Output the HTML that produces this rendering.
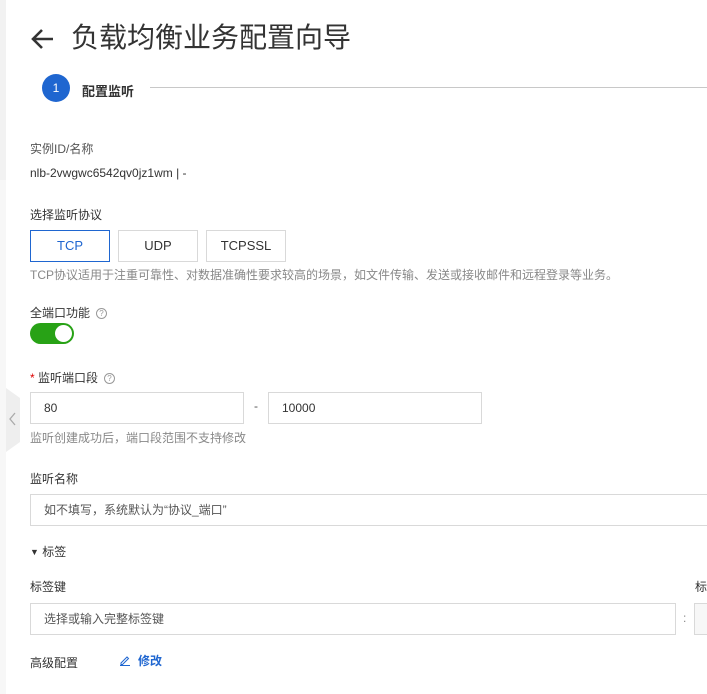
<!DOCTYPE html>
<html><head><meta charset="utf-8"><style>
*{box-sizing:border-box;margin:0;padding:0}
body{width:707px;height:694px;overflow:hidden;background:#fff;position:relative;font-family:"Liberation Sans","Noto Sans CJK SC",sans-serif;color:#333}
.a{position:absolute;white-space:nowrap}
.lbl{font-size:12px;color:#333}
.box{position:absolute;border:1px solid #d9d9d9;background:#fff;font-size:12px}
.hint{font-size:12px;color:#888}
.q{display:inline-block;width:11px;height:11px;border:1px solid #999;border-radius:50%;font-size:8px;line-height:9px;text-align:center;color:#999;vertical-align:1px;margin-left:6px}
</style></head><body>
<div class="a" style="left:0;top:0;width:6px;height:180px;background:#f2f2f2"></div>
<div class="a" style="left:0;top:180px;width:6px;height:514px;background:#f7f7f7"></div>
<div class="a" style="left:6px;top:388px;width:14px;height:64px;background:#eee;clip-path:polygon(0 0,100% 10px,100% 54px,0 100%)"></div>
<svg class="a" style="left:9px;top:412px" width="8" height="14"><path d="M6 1L1 7l5 6" stroke="#aaa" stroke-width="1.3" fill="none"/></svg>
<svg class="a" style="left:30px;top:28px" width="24" height="22"><path d="M23 11H3M12 2L3 11l9 9" stroke="#333" stroke-width="2.6" fill="none"/></svg>
<div class="a" style="left:71px;top:19px;font-size:28px;color:#333;line-height:38px">负载均衡业务配置向导</div>
<div class="a" style="left:42px;top:74px;width:28px;height:28px;border-radius:50%;background:#1f66d0;color:#fff;font-size:12px;text-align:center;line-height:28px">1</div>
<div class="a" style="left:82px;top:81px;font-size:13px;font-weight:bold;color:#333">配置监听</div>
<div class="a" style="left:150px;top:87px;width:557px;height:1px;background:#c8c8c8"></div>
<div class="a lbl" style="left:30px;top:140px;color:#555">实例ID/名称</div>
<div class="a lbl" style="left:30px;top:166px">nlb-2vwgwc6542qv0jz1wm | -</div>
<div class="a lbl" style="left:30px;top:206px">选择监听协议</div>
<div class="box" style="left:30px;top:230px;width:80px;height:32px;border-color:#1f66d0;color:#1f66d0;text-align:center;line-height:30px;font-size:13px">TCP</div>
<div class="box" style="left:118px;top:230px;width:80px;height:32px;text-align:center;line-height:30px;font-size:13px">UDP</div>
<div class="box" style="left:206px;top:230px;width:80px;height:32px;text-align:center;line-height:30px;font-size:13px">TCPSSL</div>
<div class="a hint" style="left:30px;top:266px">TCP协议适用于注重可靠性、对数据准确性要求较高的场景，如文件传输、发送或接收邮件和远程登录等业务。</div>
<div class="a lbl" style="left:30px;top:304px">全端口功能<span class="q">?</span></div>
<div class="a" style="left:30px;top:323px;width:44px;height:21px;border-radius:11px;background:#28a216"></div>
<div class="a" style="left:55px;top:325px;width:17px;height:17px;border-radius:50%;background:#fff"></div>
<div class="a lbl" style="left:30px;top:369px"><span style="color:#d00">*</span> 监听端口段<span class="q">?</span></div>
<div class="box" style="left:30px;top:392px;width:214px;height:32px;padding-left:13px;line-height:30px">80</div>
<div class="a lbl" style="left:254px;top:399px;color:#555">-</div>
<div class="box" style="left:268px;top:392px;width:214px;height:32px;padding-left:13px;line-height:30px">10000</div>
<div class="a hint" style="left:30px;top:429px">监听创建成功后，端口段范围不支持修改</div>
<div class="a lbl" style="left:30px;top:470px">监听名称</div>
<div class="box" style="left:30px;top:494px;width:690px;height:32px;padding-left:13px;line-height:30px;color:#555">如不填写，系统默认为“协议_端口”</div>
<div class="a lbl" style="left:30px;top:543px"><span style="font-size:9px;vertical-align:1px">▼</span> 标签</div>
<div class="a lbl" style="left:30px;top:578px">标签键</div>
<div class="a lbl" style="left:695px;top:578px">标</div>
<div class="box" style="left:30px;top:603px;width:646px;height:32px;padding-left:13px;line-height:30px;color:#555">选择或输入完整标签键</div>
<div class="a lbl" style="left:683px;top:611px;color:#888">:</div>
<div class="box" style="left:694px;top:603px;width:30px;height:32px;background:#f7f7f7"></div>
<div class="a lbl" style="left:30px;top:654px">高级配置</div>
<svg class="a" style="left:119px;top:654px" width="12" height="12"><path d="M2 9L8 3l1.5 1.5-6 6H2zM1 11.5h10" stroke="#1f66d0" stroke-width="1" fill="none"/></svg>
<div class="a" style="left:138px;top:652px;font-size:12px;font-weight:bold;color:#1f66d0">修改</div>
</body></html>
